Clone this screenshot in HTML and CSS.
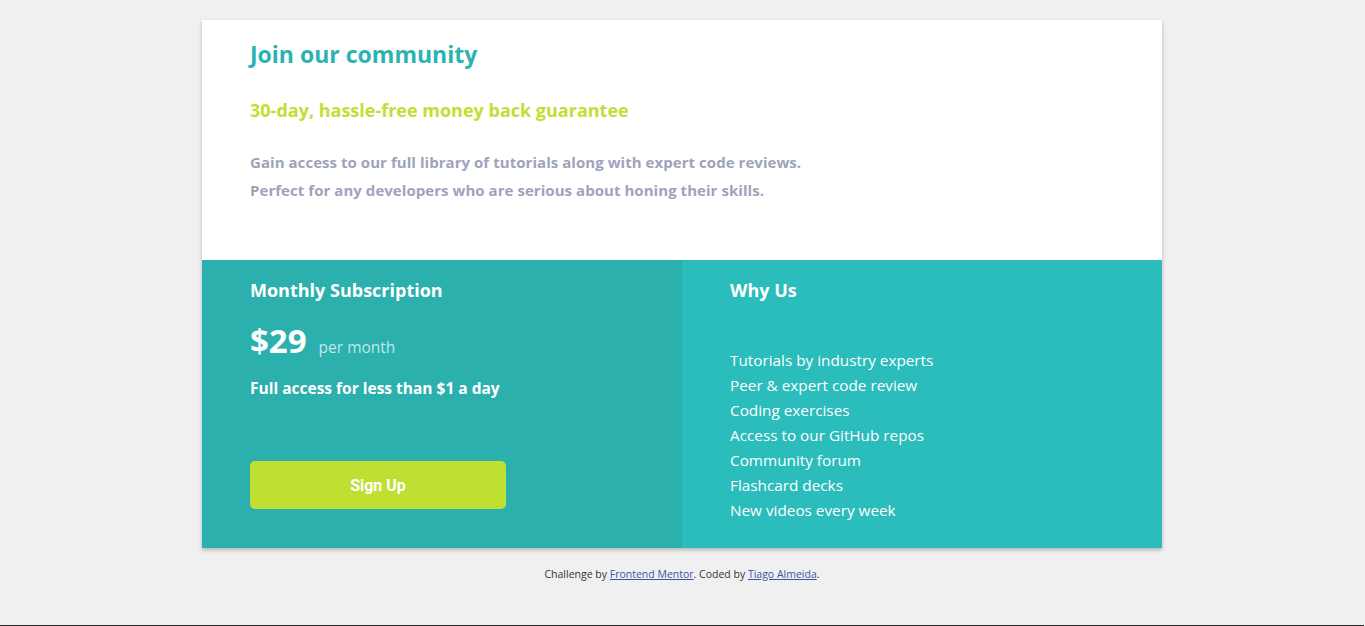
FILE: index.html
```html
<!DOCTYPE html>
<html lang="en">
<head>
<meta charset="utf-8">
<title>Single Price Grid</title>
<link rel="stylesheet" href="styles.css">
</head>
<body>
<main class="card">
  <section class="intro">
    <h1 class="title">Join our community</h1>
    <h2 class="guarantee">30-day, hassle-free money back guarantee</h2>
    <p class="desc">Gain access to our full library of tutorials along with expert code reviews.<br>Perfect for any developers who are serious about honing their skills.</p>
  </section>
  <div class="bottom">
    <section class="subscription">
      <h3 class="sub-title">Monthly Subscription</h3>
      <div class="price"><span class="amount">$29</span><span class="per">per month</span></div>
      <p class="access">Full access for less than $1 a day</p>
      <button class="signup">Sign Up</button>
    </section>
    <section class="why">
      <h3 class="why-title">Why Us</h3>
      <ul class="why-list">
        <li>Tutorials by industry experts</li>
        <li>Peer &amp; expert code review</li>
        <li>Coding exercises</li>
        <li>Access to our GitHub repos</li>
        <li>Community forum</li>
        <li>Flashcard decks</li>
        <li>New videos every week</li>
      </ul>
    </section>
  </div>
</main>
<footer class="attribution">Challenge by <a href="#">Frontend Mentor</a>. Coded by <a href="#">Tiago Almeida</a>.</footer>
<div class="under"></div>
</body>
</html>
```
FILE: styles.css
```css
* { box-sizing: border-box; }
html, body { margin: 0; padding: 0; }
body {
  background: #f0f0f0;
  font-family: "Open Sans", "Noto Sans", sans-serif;
  padding: 20px 1px 0 0;
  height: 626px;
  overflow: hidden;
  display: flex;
  flex-direction: column;
  align-items: center;
}
.card {
  width: 960px;
  box-shadow: 0 2px 4px rgba(0,0,0,0.25);
}
.intro {
  background: #fff;
  height: 240px;
  padding: 20px 48px 0;
}
.title {
  margin: 0;
  font-size: 23px;
  line-height: 28px;
  font-weight: 700;
  color: #2bb3b1;
}
.guarantee {
  margin: 30px 0 0;
  font-size: 18px;
  line-height: 24px;
  font-weight: 700;
  color: #c0df34;
}
.desc {
  margin: 26px 0 0;
  font-size: 15px;
  line-height: 28px;
  font-weight: 700;
  color: #9ea3bb;
  letter-spacing: 0.05px;
}
.bottom {
  display: flex;
  height: 288px;
  color: #fff;
}
.subscription {
  flex: 1;
  background: #2bb0ae;
  padding: 18px 48px 0;
}
.why {
  flex: 1;
  background: #2bbcbc;
  padding: 18px 48px 0;
}
.sub-title, .why-title {
  margin: 0;
  font-size: 18px;
  line-height: 24px;
  font-weight: 700;
}
.price {
  display: flex;
  align-items: baseline;
  margin-top: 18px;
}
.amount {
  font-size: 33px;
  line-height: 42px;
  font-weight: 700;
}
.per {
  margin-left: 12px;
  font-size: 15.5px;
  color: #bfe9e8;
}
.access {
  margin: 14px 0 0;
  font-size: 15.5px;
  line-height: 24px;
  font-weight: 700;
}
.signup {
  display: block;
  margin-top: 61px;
  width: 256px;
  height: 48px;
  border: 0;
  border-radius: 5px;
  background: #bfe032;
  color: #fff;
  font-family: Roboto, "Liberation Sans", sans-serif;
  font-size: 16px;
  font-weight: 700;
}
.why-list {
  list-style: none;
  margin: 46px 0 0;
  padding: 0;
  font-size: 15.3px;
  line-height: 25px;
}
.attribution {
  margin-top: 20px;
  font-size: 10.5px;
  line-height: 13px;
  color: #333;
  font-family: "Open Sans", sans-serif;
}
.attribution a { color: #3e52a3; }
.under {
  margin-top: auto;
  align-self: stretch;
  height: 1px;
  background: #2a2a2a;
}
```
